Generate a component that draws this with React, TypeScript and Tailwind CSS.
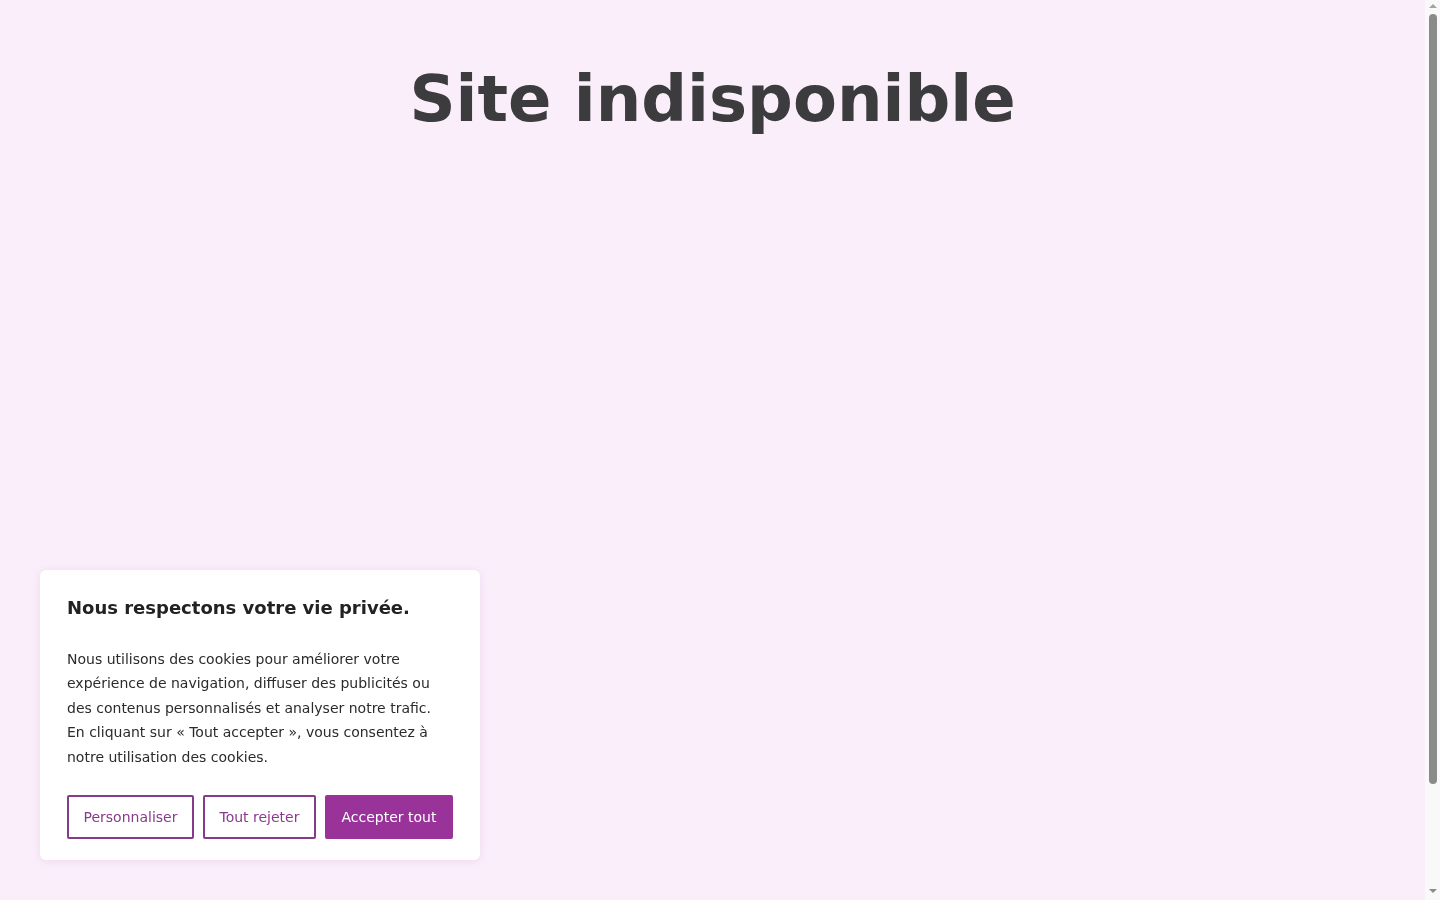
import React from "react";

export default function App() {
  return (
    <div
      className="flex h-[900px] overflow-hidden bg-[#fbeefb] text-[#3b3b3b]"
      style={{ fontFamily: '"DejaVu Sans", sans-serif' }}
    >
      <main className="min-h-[1030px] flex-1">
        <h1 className="pt-[51px] text-center text-[64px] font-bold leading-normal text-[#3c3b3d]">
          Site indisponible
        </h1>
        <div className="fixed bottom-[40px] left-[40px] w-[440px] rounded-md bg-white px-[27px] pt-[24px] pb-[21px] shadow-[0_1px_8px_rgba(120,60,120,0.12)]">
          <h2 className="mb-[26px] text-[18px] font-bold leading-[27px] text-[#222222]">
            Nous respectons votre vie privée.
          </h2>
          <p className="text-[14px] leading-[24.5px] text-[#2b2b2b]">
            Nous utilisons des cookies pour améliorer votre expérience de navigation, diffuser des publicités ou des contenus personnalisés et analyser notre trafic. En cliquant sur « Tout accepter », vous consentez à notre utilisation des cookies.
          </p>
          <div className="mt-[26px] flex gap-[9px]">
            <button className="h-[44px] rounded-[2px] border-2 border-[#853a8a] bg-white px-[14.5px] text-[14px] text-[#8a3a8c]">
              Personnaliser
            </button>
            <button className="h-[44px] rounded-[2px] border-2 border-[#853a8a] bg-white px-[14.5px] text-[14px] text-[#8a3a8c]">
              Tout rejeter
            </button>
            <button className="h-[44px] rounded-[2px] border-2 border-[#993399] bg-[#993399] px-[14.5px] text-[14px] text-white">
              Accepter tout
            </button>
          </div>
        </div>
      </main>
      <div className="flex h-[900px] w-[15px] flex-col items-center bg-[#f9f9f9]">
        <div className="mt-[4px] h-0 w-0 border-x-[4px] border-b-[4px] border-x-transparent border-b-[#a3a3a3]" />
        <div className="mt-[6px] h-[770px] w-[8px] rounded-full bg-[#8a8a8a]" />
        <div className="flex-1" />
        <div className="mb-[7px] h-0 w-0 border-x-[4px] border-t-[4px] border-x-transparent border-t-[#8a8a8a]" />
      </div>
    </div>
  );
}
